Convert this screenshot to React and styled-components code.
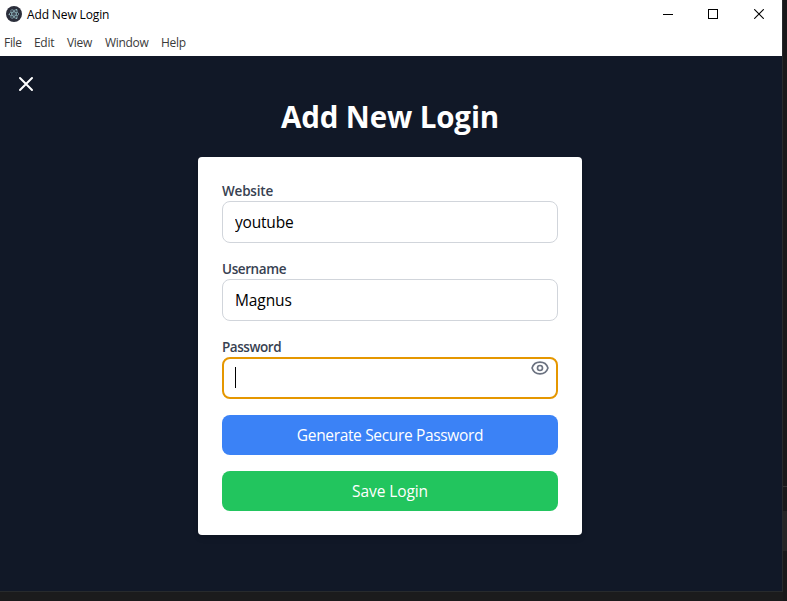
import React from "react";
import styled, { createGlobalStyle } from "styled-components";

const GlobalStyle = createGlobalStyle`
  *, *::before, *::after { box-sizing: border-box; }
  body {
    margin: 0;
    overflow: hidden;
    background: #19191b;
    font-family: "Segoe UI", "Open Sans", "Noto Sans", sans-serif;
  }
`;

const Desktop = styled.div`
  display: flex;
  width: 787px;
  height: 601px;
  background: linear-gradient(#1b1b1c, #1b1b1c) 0 592px / 783px 9px no-repeat, #18181a;
`;

const Window = styled.div`
  display: flex;
  flex-direction: column;
  width: 783px;
  height: 592px;
  border-right: 1px solid #272a2c;
  border-bottom: 1px solid #272a2c;
  background: #111827;
`;

const EdgeStrip = styled.div`
  display: flex;
  flex-direction: column;
  width: 4px;
  padding-top: 486px;
`;

const EdgeLine = styled.div`
  height: 1px;
  background: #343436;
  margin-bottom: 24px;
`;

const EdgeThumb = styled.div`
  height: 40px;
  background: #252526;
`;

const TitleBar = styled.header`
  display: flex;
  align-items: center;
  height: 28px;
  padding-left: 6px;
  background: #fff;
`;

const WindowTitle = styled.span`
  flex: 1;
  margin-left: 5px;
  padding-top: 1px;
  font-size: 12px;
  line-height: 16px;
  letter-spacing: ${(p) => p.$track}px;
  color: #000;
`;

const WindowButton = styled.button`
  display: grid;
  place-items: center;
  width: ${(p) => p.$width || 45}px;
  height: 28px;
  padding: 0;
  border: 0;
  background: transparent;
  color: #000;
  svg { display: block; }
`;

const MenuBar = styled.nav`
  display: flex;
  height: 28px;
  padding-left: 4px;
  background: #fff;
`;

const MenuItem = styled.span`
  width: ${(p) => p.$width}px;
  font-size: 12px;
  line-height: 30px;
  letter-spacing: ${(p) => p.$track}px;
  white-space: nowrap;
  color: #3a3a3a;
`;

const Page = styled.main`
  display: flex;
  flex-direction: column;
  align-items: center;
  padding-top: 16px;
`;

const CloseButton = styled.button`
  align-self: flex-start;
  width: 24px;
  height: 24px;
  margin-left: 14px;
  padding: 0;
  border: 0;
  background: transparent;
  color: #fff;
  svg { display: block; }
`;

const Heading = styled.h1`
  margin: 3px 0 22px;
  padding-right: 2px;
  font-size: 29.5px;
  line-height: 36px;
  font-weight: 700;
  letter-spacing: ${(p) => p.$track}px;
  white-space: nowrap;
  color: #fff;
`;

const Card = styled.form`
  display: flex;
  flex-direction: column;
  width: 384px;
  height: 378px;
  margin-left: -2px;
  padding: 24px;
  border-radius: 4px;
  background: #fff;
  box-shadow: 0 4px 6px -1px rgba(0, 0, 0, 0.1), 0 2px 4px -2px rgba(0, 0, 0, 0.1);
`;

const Field = styled.div`
  flex: none;
  height: 62px;
  margin-bottom: 16px;
`;

const Label = styled.label`
  display: block;
  height: 20px;
  font-size: 13.5px;
  line-height: 20px;
  font-weight: 600;
  letter-spacing: ${(p) => p.$track}px;
  color: #374151;
`;

const InputFrame = styled.div`
  position: relative;
  display: flex;
  align-items: center;
  height: 42px;
  padding-left: ${(p) => (p.$focused ? 11 : 12)}px;
  border: ${(p) => (p.$focused ? "2px solid #e59700" : "1px solid #d1d5db")};
  border-radius: 8px;
`;

const Input = styled.input`
  flex: 1;
  min-width: 0;
  padding: 0;
  border: 0;
  outline: 0;
  background: transparent;
  font-family: inherit;
  font-size: 15.5px;
  line-height: 24px;
  letter-spacing: ${(p) => p.$track}px;
  color: #000;
  caret-color: transparent;
`;

const Caret = styled.span`
  width: 1px;
  height: 21px;
  margin-bottom: 2px;
  background: #000;
`;

const RevealButton = styled.button`
  position: absolute;
  top: -1px;
  right: 6px;
  width: 20px;
  height: 20px;
  padding: 0;
  border: 0;
  background: transparent;
  color: #6b7280;
  svg { display: block; }
`;

const ActionButton = styled.button`
  flex: none;
  height: 40px;
  margin-bottom: 16px;
  padding: 0;
  border: 0;
  border-radius: 8px;
  background: ${(p) => p.$color};
  color: #fff;
  font-family: inherit;
  font-size: 15.5px;
  line-height: 24px;
  letter-spacing: ${(p) => p.$track}px;
`;

const ElectronIcon = () => (
  <svg width="16" height="16" viewBox="0 0 16 16" fill="none">
    <circle cx="8" cy="8" r="8" fill="#2b2e3b" />
    <g stroke="#8fb4bd" strokeWidth="0.7">
      <ellipse cx="8" cy="8" rx="4.9" ry="2" transform="rotate(0 8 8)" />
      <ellipse cx="8" cy="8" rx="4.9" ry="2" transform="rotate(60 8 8)" />
      <ellipse cx="8" cy="8" rx="4.9" ry="2" transform="rotate(120 8 8)" />
    </g>
    <g fill="#9fc3cb">
      <circle cx="8" cy="8" r="0.6" />
      <circle cx="3.2" cy="8.6" r="0.7" />
      <circle cx="10.6" cy="3.8" r="0.7" />
      <circle cx="10.6" cy="12.3" r="0.7" />
    </g>
  </svg>
);

const MinimizeIcon = () => (
  <svg width="10" height="10" viewBox="0 0 10 10" shapeRendering="crispEdges">
    <path d="M0 5.5h10" stroke="currentColor" />
  </svg>
);

const MaximizeIcon = () => (
  <svg width="10" height="10" viewBox="0 0 10 10" shapeRendering="crispEdges" fill="none">
    <rect x="0.5" y="0.5" width="9" height="9" stroke="currentColor" />
  </svg>
);

const DismissIcon = () => (
  <svg width="10" height="10" viewBox="0 0 10 10">
    <path d="M0.2 0.2l9.6 9.6M9.8 0.2L0.2 9.8" stroke="currentColor" strokeWidth="1.1" />
  </svg>
);

const CrossIcon = () => (
  <svg width="24" height="24" viewBox="0 0 24 24" fill="none">
    <path d="M6 18L18 6M6 6l12 12" stroke="currentColor" strokeWidth="2" strokeLinecap="round" strokeLinejoin="round" />
  </svg>
);

const EyeIcon = () => (
  <svg width="20" height="20" viewBox="0 0 24 24" fill="none" stroke="currentColor" strokeWidth="2" strokeLinecap="round" strokeLinejoin="round">
    <path d="M15 12a3 3 0 11-6 0 3 3 0 016 0z" />
    <path d="M2.458 12C3.732 7.943 7.523 5 12 5c4.478 0 8.268 2.943 9.542 7-1.274 4.057-5.064 7-9.542 7-4.477 0-8.268-2.943-9.542-7z" />
  </svg>
);

const MENU = [
  { label: "File", width: 30 },
  { label: "Edit", width: 33 },
  { label: "View", width: 38 },
  { label: "Window", width: 56 },
  { label: "Help", width: 40 },
];

export default function App() {
  return (
    <>
      <GlobalStyle />
      <Desktop>
        <Window>
          <TitleBar>
            <ElectronIcon />
            <WindowTitle $track={-0.13}>Add New Login</WindowTitle>
            <WindowButton aria-label="Minimize"><MinimizeIcon /></WindowButton>
            <WindowButton aria-label="Maximize"><MaximizeIcon /></WindowButton>
            <WindowButton $width={47} aria-label="Close window"><DismissIcon /></WindowButton>
          </TitleBar>
          <MenuBar>
            {MENU.map((m) => (
              <MenuItem key={m.label} $width={m.width} $track={-0.3}>{m.label}</MenuItem>
            ))}
          </MenuBar>
          <Page>
            <CloseButton aria-label="Close"><CrossIcon /></CloseButton>
            <Heading $track={-0.12}>Add New Login</Heading>
            <Card onSubmit={(e) => e.preventDefault()}>
              <Field>
                <Label htmlFor="website" $track={-0.2}>Website</Label>
                <InputFrame>
                  <Input id="website" defaultValue="youtube" $track={-0.2} />
                </InputFrame>
              </Field>
              <Field>
                <Label htmlFor="username" $track={-0.4}>Username</Label>
                <InputFrame>
                  <Input id="username" defaultValue="Magnus" $track={-0.1} />
                </InputFrame>
              </Field>
              <Field>
                <Label htmlFor="password" $track={-0.45}>Password</Label>
                <InputFrame $focused>
                  <Caret />
                  <Input id="password" type="password" />
                  <RevealButton type="button" aria-label="Show password"><EyeIcon /></RevealButton>
                </InputFrame>
              </Field>
              <ActionButton type="button" $color="#3b82f6" $track={-0.34}>Generate Secure Password</ActionButton>
              <ActionButton type="submit" $color="#22c55e" $track={-0.1}>Save Login</ActionButton>
            </Card>
          </Page>
        </Window>
        <EdgeStrip>
          <EdgeLine />
          <EdgeThumb />
        </EdgeStrip>
      </Desktop>
    </>
  );
}
